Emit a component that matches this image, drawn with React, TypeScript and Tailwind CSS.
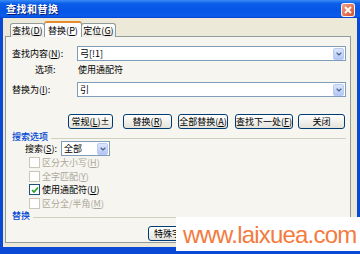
import { ChevronDown } from 'lucide-react'
import type { ReactNode } from 'react'

const FONT = '"Noto Sans CJK SC", "Liberation Sans", sans-serif'

// underlined access key inside "(N)"
function K({ k }: { k: string }) {
  return (
    <span>
      (<span className="underline">{k}</span>)
    </span>
  )
}

function Arrow() {
  return (
    <div className="w-[11px] h-[12px] mr-[1px] rounded-[2px] border border-[#B9CBF3] bg-gradient-to-b from-[#DCE6FD] to-[#B3C7F5] flex items-center justify-center shrink-0">
      <ChevronDown size={8} strokeWidth={3.5} className="text-[#4D6185]" />
    </div>
  )
}

function Btn({ className, children }: { className: string; children: ReactNode }) {
  return (
    <div
      className={`h-[15px] shrink-0 flex items-center justify-center rounded-[3px] border border-[#003C74] bg-gradient-to-b from-white to-[#E4E2D9] text-[9px] leading-none text-black whitespace-nowrap ${className}`}
    >
      {children}
    </div>
  )
}

function Check({ label, k, checked, disabled }: { label: string; k: string; checked?: boolean; disabled?: boolean }) {
  return (
    <div className="h-[13.5px] flex items-center pl-[23px]">
      <div
        className={`w-[11px] h-[11px] border bg-white flex items-center justify-center ${
          disabled ? 'border-[#CAC8BB]' : 'border-[#1C5180]'
        }`}
      >
        {checked && (
          <svg width="8" height="8" viewBox="0 0 8 8">
            <path d="M1 4 L3 6 L7 1.5" fill="none" stroke="#21A121" strokeWidth="1.6" />
          </svg>
        )}
      </div>
      <span className={`ml-[2px] text-[9px] leading-none ${disabled ? 'text-[#ACA899]' : 'text-black'}`}>
        {label}
        <K k={k} />
      </span>
    </div>
  )
}

function Heading({ children }: { children: ReactNode }) {
  return (
    <div className="h-[10px] flex items-center pl-[6px] pr-[4px]">
      <span className="text-[9px] leading-none text-[#0046D5] font-medium">{children}</span>
      <div className="flex-1 h-px bg-[#D0D0BF] ml-[3px] mt-[5px]" />
    </div>
  )
}

function Tab({ label, k, active }: { label: string; k: string; active?: boolean }) {
  if (active) {
    return (
      <div className="relative z-10 h-[16px] w-[38px] -ml-px rounded-t-[3px] border border-b-0 border-[#919B9C] border-t-[#E68B2C] border-t-2 bg-[#FCFCFE] flex items-center justify-center text-[9px] leading-none">
        {label}
        <K k={k} />
      </div>
    )
  }
  return (
    <div className="h-[14px] w-[35px] -ml-px first:ml-0 rounded-t-[3px] border border-b-0 border-[#919B9C] bg-gradient-to-b from-white to-[#ECEBE5] flex items-center justify-center text-[9px] leading-none">
      {label}
      <K k={k} />
    </div>
  )
}

export default function App() {
  return (
    <div className="relative w-[360px] h-[254px] overflow-hidden bg-[#0A48D6] text-black" style={{ fontFamily: FONT }}>
      {/* title bar */}
      <div className="h-[18px] flex items-center justify-between pl-[6px] pr-[5px] bg-[linear-gradient(#3A8CF6,#0A5EE8_20%,#0655E6_60%,#0A5CEB_90%,#0040D0)]">
        <span className="text-white text-[10px] font-bold leading-none tracking-[0.5px] [text-shadow:1px_1px_0_#0A1E6E]">
          查找和替换
        </span>
        <div className="w-[14px] h-[14px] mt-[1px] rounded-[3px] border border-white/90 bg-gradient-to-br from-[#F0A088] to-[#D24E2A] flex items-center justify-center">
          <svg width="8" height="8" viewBox="0 0 8 8">
            <path d="M1 1 L7 7 M7 1 L1 7" stroke="white" strokeWidth="1.8" />
          </svg>
        </div>
      </div>

      {/* dialog body */}
      <div className="mx-[3px] h-[229px] bg-[#ECE9D8] pt-[3px] pl-[2px]">
        <div className="flex items-end h-[16px] pl-[5px]">
          <Tab label="查找" k="D" />
          <Tab label="替换" k="P" active />
          <Tab label="定位" k="G" />
        </div>

        <div className="-mt-px w-[346px] h-[207px] border border-[#919B9C] bg-[#F6F5F0] pt-[9px]">
          {/* find */}
          <div className="h-[15px] flex items-center pl-[6px] pr-[4px]">
            <span className="w-[65px] text-[9px] leading-none">
              查找内容<K k="N" />:
            </span>
            <div className="flex-1 h-[15px] border border-[#7F9DB9] bg-white flex items-center justify-between pl-[2px]">
              <span className="text-[9px] leading-none">弓[!1]</span>
              <Arrow />
            </div>
          </div>
          <div className="h-[12px] mt-[2px] flex items-center pl-[29px] text-[9px] leading-none">
            <span className="w-[43px]">选项:</span>
            <span>使用通配符</span>
          </div>

          {/* replace */}
          <div className="h-[15px] mt-[7px] flex items-center pl-[6px] pr-[4px]">
            <span className="w-[65px] text-[9px] leading-none">
              替换为<K k="I" />:
            </span>
            <div className="flex-1 h-[15px] border border-[#7F9DB9] bg-white flex items-center justify-between pl-[2px]">
              <span className="text-[9px] leading-none">引</span>
              <Arrow />
            </div>
          </div>

          {/* buttons */}
          <div className="flex mt-[17px] pl-[62px]">
            <Btn className="w-[45px]">
              常规<K k="L" /> ±
            </Btn>
            <Btn className="w-[49px] ml-[10px]">
              替换<K k="R" />
            </Btn>
            <Btn className="w-[50px] ml-[6px]">
              全部替换<K k="A" />
            </Btn>
            <Btn className="w-[58px] ml-[7px]">
              查找下一处<K k="F" />
            </Btn>
            <Btn className="w-[47px] ml-[5px]">关闭</Btn>
          </div>

          <div className="mt-[2px]">
            <Heading>搜索选项</Heading>
          </div>

          <div className="h-[15px] flex items-center pl-[19px]">
            <span className="w-[36px] text-[9px] leading-none">
              搜索<K k="S" />:
            </span>
            <div className="w-[49px] h-[15px] border border-[#7F9DB9] bg-white flex items-center justify-between pl-[2px]">
              <span className="text-[9px] leading-none">全部</span>
              <Arrow />
            </div>
          </div>

          <Check label="区分大小写" k="H" disabled />
          <Check label="全字匹配" k="Y" disabled />
          <Check label="使用通配符" k="U" checked />
          <Check label="区分全/半角" k="M" disabled />

          <Heading>替换</Heading>

          <div className="flex mt-[6px] pl-[142px]">
            <Btn className="w-[64px] justify-start pl-[5px]">特殊字</Btn>
          </div>
        </div>
      </div>

      {/* watermark */}
      <div className="absolute left-[176px] top-[217px] w-[184px] h-[34px] bg-white flex items-center pl-[7px]">
        <span
          className="text-[24px] leading-none tracking-[-0.8px] text-[#F47B3E] mt-[2px]"
          style={{ fontFamily: '"Liberation Sans", Arial, sans-serif' }}
        >
          www.laixuea.com
        </span>
      </div>
    </div>
  )
}
